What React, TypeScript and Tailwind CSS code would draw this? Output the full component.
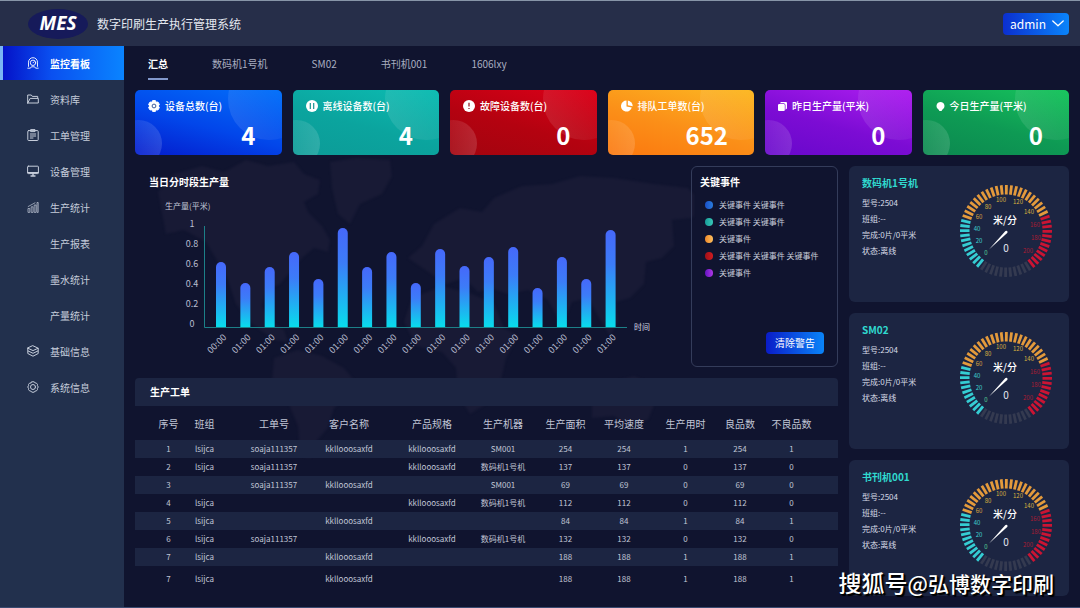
import React from "react";

const ink = { fill: "none", stroke: "currentColor", strokeWidth: 1, strokeLinecap: "round", strokeLinejoin: "round" } as const;

function Glyph({ children }: { children: React.ReactNode }) {
  return (
    <svg viewBox="0 0 12 12" className="size-3 shrink-0" aria-hidden="true" {...ink}>
      {children}
    </svg>
  );
}

const monitorIcon = (
  <Glyph>
    <path d="M1.500 9.400V5.200A4.500 4.500 0 0 1 10.500 5.200v4.200" strokeWidth=".9" />
    <circle cx="6" cy="5.800" r="2.700" strokeWidth=".9" />
    <path d="M6 5.800 7 4.800M.8 11.200h2.600l1-1.400h3.200l1 1.400h2.600" strokeWidth=".9" />
  </Glyph>
);
const folderIcon = (
  <Glyph>
    <path d="M.7 10V2h3.600l1 1.400h5.400V5M.7 10h10.600V5.400H3.200L.7 10" />
  </Glyph>
);
const orderIcon = (
  <Glyph>
    <rect x=".8" y="1.600" width="10.400" height="9.900" rx=".8" />
    <path d="M4 .600h4v2H4zM3.300 5h5.400M3.300 7h5.400M3.300 9h2.700" />
  </Glyph>
);
const screenIcon = (
  <Glyph>
    <rect x=".6" y="1.200" width="10.800" height="7.400" rx=".7" />
    <path d="M.8 7.600h10.400M4 11h4M6 8.800v2" strokeWidth="1.400" />
  </Glyph>
);
const chartIcon = (
  <Glyph>
    <path d="M1 11V7.500h1.800V11zM4.200 11V5.800H6V11zM7.200 11V4H9v7zM10 11V1.500h1.200V11zM1.200 5.500 8 1.800" strokeWidth=".7" />
  </Glyph>
);
const stackIcon = (
  <Glyph>
    <path d="M6 .8 11.200 3.200 6 5.600.8 3.200zM.8 3.400v2.400L6 8.300l5.200-2.500V3.400M.8 6v2.500L6 11.200l5.200-2.700V6" />
  </Glyph>
);
const gearIcon = (
  <Glyph>
    <path d="M4.500 1 6 .7 7.500 1l.7 1 1.300.2 1 1.300-.1 1.200.9 1.300-.9 1.300.1 1.200-1 1.300-1.300.2-.7 1-1.500.3-1.500-.3-.7-1-1.300-.2-1-1.300.1-1.200L.7 6l.9-1.300-.1-1.200 1-1.300L3.800 2z" />
    <circle cx="6" cy="6" r="2.500" />
  </Glyph>
);

const nav = [
  { label: "监控看板", icon: monitorIcon, active: true },
  { label: "资料库", icon: folderIcon },
  { label: "工单管理", icon: orderIcon },
  { label: "设备管理", icon: screenIcon },
  { label: "生产统计", icon: chartIcon },
  { label: "生产报表" },
  { label: "墨水统计" },
  { label: "产量统计" },
  { label: "基础信息", icon: stackIcon },
  { label: "系统信息", icon: gearIcon },
];

const tabs = ["汇总", "数码机1号机", "SM02", "书刊机001", "1606lxy"];

const stats = [
  {
    label: "设备总数(台)",
    value: "4",
    tone: "bg-[linear-gradient(15deg,#0420cf_5%,#0246ea_45%,#0270fa_100%)]",
    icon: (
      <svg viewBox="0 0 12 12" className="size-3 shrink-0" aria-hidden="true">
        <path fill="#fff" stroke="#fff" strokeLinejoin="round" d="M4.600.600h2.800L8 2.300l1.900-.3 1.500 2.400L10.300 6l1.100 1.600L9.900 10 8 9.700l-.6 1.700H4.600L4 9.700l-1.900.3L.6 7.600 1.700 6 .6 4.400 2.100 2l1.900.3z" />
        <circle cx="6" cy="6" r="1.900" fill="none" stroke="#3c5c9c" />
      </svg>
    ),
  },
  {
    label: "离线设备数(台)",
    value: "4",
    tone: "bg-[linear-gradient(15deg,#0c9c98_5%,#0ba49e_45%,#0cbcb2_100%)]",
    icon: (
      <svg viewBox="0 0 12 12" className="size-3 shrink-0" aria-hidden="true">
        <circle cx="6" cy="6" r="6" fill="#fff" />
        <path d="M4.300 3v6M7.700 3v6" stroke="#14938e" strokeWidth="1.200" />
      </svg>
    ),
  },
  {
    label: "故障设备数(台)",
    value: "0",
    tone: "bg-[linear-gradient(15deg,#a4040f_5%,#b40210_45%,#dc0018_100%)]",
    icon: (
      <svg viewBox="0 0 12 12" className="size-3 shrink-0" aria-hidden="true">
        <circle cx="6" cy="6" r="6" fill="#fff" />
        <path d="M6 2.800v3.800M6 8v1" stroke="#8c1018" strokeWidth="1.200" />
      </svg>
    ),
  },
  {
    label: "排队工单数(台)",
    value: "652",
    tone: "bg-[linear-gradient(15deg,#fb7a10_5%,#fb8f18_45%,#fcb822_100%)]",
    icon: (
      <svg viewBox="0 0 12 12" className="size-3 shrink-0" aria-hidden="true">
        <path fill="#fff" d="M5.500.6v5.800l5.300 1.200A5.500 5.500 0 1 1 5.500.6z" />
        <path fill="#fff" d="M6.800.4a5.600 5.600 0 0 1 4.900 5.900L6.800 5.200z" />
      </svg>
    ),
  },
  {
    label: "昨日生产量(平米)",
    value: "0",
    tone: "bg-[linear-gradient(15deg,#6a08cc_5%,#7c0cd4_45%,#ae1ef0_100%)]",
    icon: (
      <svg viewBox="0 0 9 9" className="size-[9px] shrink-0" aria-hidden="true">
        <path fill="#fff" d="M0 3.200A1.200 1.200 0 0 1 1.200 2H5.600A1.200 1.200 0 0 1 6.800 3.200V8A1 1 0 0 1 5.800 9H1A1 1 0 0 1 0 8zM1.800 1.300 3 0h5a1 1 0 0 1 1 1v5.500L7.500 7.800V2.800L6.200 1.300z" />
      </svg>
    ),
  },
  {
    label: "今日生产量(平米)",
    value: "0",
    tone: "bg-[linear-gradient(15deg,#0c8a50_5%,#0e9a54_45%,#16c45c_100%)]",
    icon: (
      <svg viewBox="0 0 9 9" className="size-[9px] shrink-0" aria-hidden="true">
        <path fill="#fff" d="M4.500 0a4 4 0 0 1 2.200 7.300L5.500 9h-2L2.300 7.300A4 4 0 0 1 4.500 0z" />
      </svg>
    ),
  },
];

const bars = [65, 44, 60, 75, 48, 99, 60, 75, 44, 78, 61, 70, 80, 39, 70, 48, 97];
const yTicks = ["1", "0.8", "0.6", "0.4", "0.2", "0"];

const events = [
  { text: "关键事件 关键事件", dot: "bg-[linear-gradient(to_right,#1a50c8,#2a7cdc)]" },
  { text: "关键事件 关键事件", dot: "bg-[linear-gradient(to_right,#189c98,#38c8b8)]" },
  { text: "关键事件", dot: "bg-[linear-gradient(to_right,#f08828,#fcc060)]" },
  { text: "关键事件 关键事件 关键事件", dot: "bg-[linear-gradient(to_right,#a01018,#d01c20)]" },
  { text: "关键事件", dot: "bg-[linear-gradient(to_right,#6414c0,#b038e8)]" },
];

const columns = [
  { name: "序号", width: "w-[51px]", pad: "pl-4" },
  { name: "班组", width: "w-[53px]", pad: "pr-4" },
  { name: "工单号", width: "w-[70px]", pad: "" },
  { name: "客户名称", width: "w-[80px]", pad: "" },
  { name: "产品规格", width: "w-[86px]", pad: "" },
  { name: "生产机器", width: "w-[56px]", pad: "" },
  { name: "生产面积", width: "w-[69px]", pad: "" },
  { name: "平均速度", width: "w-[48px]", pad: "" },
  { name: "生产用时", width: "w-[75px]", pad: "" },
  { name: "良品数", width: "w-[34px]", pad: "" },
  { name: "不良品数", width: "w-[81px]", pad: "pr-3" },
];

const L = "lsijca";
const O = "soaja111357";
const K = "kkllooosaxfd";
const M = "数码机1号机";
const rows = [
  ["1", L, O, K, K, "SM001", "254", "254", "1", "254", "1"],
  ["2", L, O, "", K, M, "137", "137", "0", "137", "0"],
  ["3", "", O, K, "", "SM001", "69", "69", "0", "69", "0"],
  ["4", L, "", "", K, M, "112", "112", "0", "112", "0"],
  ["5", L, "", K, "", "", "84", "84", "1", "84", "1"],
  ["6", L, O, "", K, M, "132", "132", "0", "132", "0"],
  ["7", L, "", K, "", "", "188", "188", "1", "188", "1"],
  ["7", L, "", K, "", "", "188", "188", "1", "188", "1"],
];

const dialLabels: [string, number, number, string][] = [
  ["0", -20, 22, "#58d89c"],
  ["20", -27, 10, "#3fd0d0"],
  ["40", -29, -2, "#3fd0d0"],
  ["60", -27, -14, "#d8a040"],
  ["80", -18, -24, "#d8b040"],
  ["100", -5, -31, "#d8b040"],
  ["120", 12, -29, "#d8b040"],
  ["140", 23, -19, "#d8b040"],
  ["160", 29, -6, "#a81c34"],
  ["180", 30, 7, "#a81c34"],
  ["200", 22, 20, "#a81c34"],
];

function tickColor(i: number) {
  if (i < 11) return "#35cdd3";
  if (i < 33) return "#e39a3c";
  if (i < 45) return "#cb1433";
  return "#343a50";
}

function Gauge() {
  return (
    <svg viewBox="-47 -47 94 94" className="size-[94px] shrink-0" role="img" aria-label="米/分 0">
      {Array.from({ length: 56 }, (_, i) => (
        <line key={i} x1="0" y1="-46" x2="0" y2="-36.500" stroke={tickColor(i)} strokeWidth="2.800" transform={`rotate(${-141 + i * 6.43})`} />
      ))}
      {dialLabels.map(([t, x, y, c]) => (
        <text key={t} x={x} y={y + 2} fill={c} fontSize="6" textAnchor="middle">{t}</text>
      ))}
      <text x="-1" y="-7" fill="#fff" fontSize="10" fontWeight="500" textAnchor="middle">米/分</text>
      <path d="M-17 18.500-.8.2A1.200 1.200 0 0 1 1.200 2z" fill="#fff" />
      <text y="21" fill="#e4e8f2" fontSize="10" textAnchor="middle">0</text>
    </svg>
  );
}

function MachineCard({ name }: { name: string }) {
  return (
    <section className="flex h-[136px] items-start justify-between rounded-md bg-[#1c2542] pt-[9px] pr-4 pl-[13px]">
      <div>
        <h2 className="text-[10px] leading-4 font-bold text-[#30d9cf]">{name}</h2>
        <div className="mt-1 text-[8px] leading-4 text-[#d8dce8]">
          <p>型号:2504</p>
          <p>班组:--</p>
          <p>完成:0片/0平米</p>
          <p>状态:离线</p>
        </div>
      </div>
      <div className="pt-[9px]">
        <Gauge />
      </div>
    </section>
  );
}

function HourlyChart() {
  return (
    <svg viewBox="0 0 556 166" className="w-full" role="img" aria-label="当日分时段生产量">
      <defs>
        <linearGradient id="bar" x1="0" y1="0" x2="0" y2="1">
          <stop offset="0" stopColor="#4668fa" />
          <stop offset="0.35" stopColor="#3c7cf8" />
          <stop offset="1" stopColor="#08dcec" />
        </linearGradient>
      </defs>
      <text x="30" y="9" fontSize="8" fill="#c4c8d8">生产量(平米)</text>
      {yTicks.map((t, i) => (
        <text key={t} x="57" y={27 + i * 20} fontSize="9" fill="#b8bdd0" textAnchor="middle">{t}</text>
      ))}
      <path d="M69.500 26v101.500H492" fill="none" stroke="#1c8088" />
      {bars.map((h, i) => {
        const x = 86 + i * 24.35;
        return (
          <g key={i}>
            <path d={`M${x - 5} 127V${132 - h}a5 5 0 0 1 10 0V127z`} fill="url(#bar)" />
            <text fontSize="9" fill="#b4b9cc" textAnchor="middle" transform={`translate(${x - 2} 146) rotate(-45)`}>
              {i === 0 ? "00:00" : "01:00"}
            </text>
          </g>
        );
      })}
      <text x="499" y="130" fontSize="8" fill="#d4d8e4">时间</text>
    </svg>
  );
}

function WorldMap() {
  return (
    <svg viewBox="0 0 540 300" className="absolute top-[112px] left-[30px] w-[540px] fill-[#181a35] blur-[1px]" aria-hidden="true">
      <path d="M4 34 20 16 48 8 70 14 92 2l22 6 26-4 10 12 16 6-2 14-14 8 4 10 14 14 8 14-2 12-14-4-12 10-10 12-12 14-14 6-4 16 8 14 14 10 4 12-14-2-22-16-16-20-8-24-10-18-12-20-22-12-18 4z" />
      <path d="M176 4l26-4 34 2 2 16-10 18-22 10-10 20-12-10-6-26z" />
      <path d="M120 200l24-8 24 6 22 12 10 12-6 16-14 12-6 20-14 16-4 16-10-6-2-28-10-24-16-20z" />
      <path d="M254 100l14-12 12-22 26-16 22 4 12-14 28-12 30-2 28-8 34 2 40 6 34 4 14 16-10 14-20 2 2 26-12 12-16 4-2 22-14 14-14 4 2 20-8 14-12-20-10-18-16 4-10 24-14-26-20-10-20 4-18-6-12 4-14-14-18 6z" />
      <path d="M258 140l30-12 30 8 22 10 10 24 14 8-12 22-6 26-14 20-16 10-12-20-2-26-14-16-26-6-12-24z" />
      <path d="M438 240l20-16 22-6 14 6 8 18-8 20-20 6-14-10-22 2z" />
    </svg>
  );
}

export default function App() {
  return (
    <div className="flex min-h-screen flex-col border-y border-t-[#8795a8] border-b-[#3a4a70] bg-[#10142f] font-['Noto_Sans_CJK_SC',sans-serif] text-white">
      <header className="flex h-[45px] shrink-0 items-center justify-between bg-[#262e49] pr-[11px] pl-7">
        <div className="flex items-center gap-[9px]">
          <div className="flex h-[30px] w-[60px] items-center justify-center rounded-[50%] bg-[#161a5a] font-['Open_Sans',sans-serif] text-[19px] leading-none font-bold italic">
            MES
          </div>
          <h1 className="text-[12px] leading-4 text-[#e4e8f0]">数字印刷生产执行管理系统</h1>
        </div>
        <button type="button" className="flex h-[22px] items-center gap-[6px] rounded bg-[linear-gradient(to_right,#0b2fd0,#0a84fa)] pr-[5px] pl-[7px] text-[12px] leading-4">
          admin
          <svg viewBox="0 0 12 7" className="w-3" aria-hidden="true" {...ink}>
            <path d="M.8 1 6 5.800 11.200 1" strokeWidth="1.300" />
          </svg>
        </button>
      </header>

      <div className="flex flex-1">
        <nav className="w-[124px] shrink-0 bg-[#22304d]">
          <ul className="flex flex-col gap-0.5">
            {nav.map((item) => (
              <li key={item.label}>
                <a
                  href="#"
                  className={
                    item.active
                      ? "flex h-[34px] items-center gap-[11px] border-l-[3px] border-[#7ab4f4] bg-[linear-gradient(to_right,#0412c8,#0a50f0_40%,#0a84ff)] pl-6 text-[10px] font-bold"
                      : "flex h-[34px] items-center gap-[11px] pl-[27px] text-[10px] text-[#c6cddb]"
                  }
                >
                  {item.icon ?? <span className="w-3" />}
                  {item.label}
                </a>
              </li>
            ))}
          </ul>
        </nav>

        <main className="relative flex min-w-0 flex-1 flex-col px-[11px]">
          <WorldMap />
          <div role="tablist" className="relative flex h-[34px] gap-11 pl-[13px]">
            {tabs.map((t, i) => (
              <button
                key={t}
                type="button"
                role="tab"
                aria-selected={i === 0}
                className={
                  i === 0
                    ? "border-y-2 border-t-transparent border-b-[#8298cc] text-[10px] font-bold"
                    : "border-y-2 border-transparent text-[10px] text-[#a9aec0]"
                }
              >
                {t}
              </button>
            ))}
          </div>

          <div className="relative mt-[10px] grid grid-cols-6 gap-[11px]">
            {stats.map((s) => (
              <section key={s.label} className={`relative h-[65px] overflow-hidden rounded-[5px] ${s.tone}`}>
                <span className="absolute -top-8 -right-7 size-[82px] rounded-full bg-[linear-gradient(60deg,rgba(255,255,255,0.12),rgba(255,255,255,0)_70%)]" />
                <span className="absolute -bottom-3 -left-5 size-[47px] rounded-full bg-[linear-gradient(to_left,rgba(255,255,255,0.14),rgba(255,255,255,0.03))]" />
                <div className="relative flex h-full flex-col pt-2">
                  <div className="flex items-center gap-[5px] pl-[13px]">
                    {s.icon}
                    <h2 className="text-[10px] leading-4 font-medium">{s.label}</h2>
                  </div>
                  <p className="mt-[9px] pr-[26px] text-right text-[24px] leading-6 font-bold">{s.value}</p>
                </div>
              </section>
            ))}
          </div>

          <div className="relative mt-[11px] flex gap-[11px]">
            <div className="min-w-0 flex-1">
              <div className="flex">
                <section className="min-w-0 flex-1 pt-2">
                  <h2 className="pl-[14px] text-[10px] leading-4 font-bold">当日分时段生产量</h2>
                  <div className="mt-[10px]">
                    <HourlyChart />
                  </div>
                </section>
                <section className="flex h-[201px] w-[147px] shrink-0 flex-col rounded-md border border-[#343c5a] px-2 pt-[7px] pb-3">
                  <h2 className="text-[10px] leading-4 font-bold">关键事件</h2>
                  <ul className="mt-[6px] pl-[5px] text-[8px] leading-[17px] text-[#c8ccda]">
                    {events.map((e, i) => (
                      <li key={i} className="flex items-center gap-[6px] whitespace-nowrap">
                        <span className={`size-2 rounded-full ${e.dot}`} />
                        {e.text}
                      </li>
                    ))}
                  </ul>
                  <button type="button" className="mt-auto mr-[5px] h-[22px] self-end rounded bg-[linear-gradient(to_right,#0a1cc8,#0a84f8)] px-[9px] text-[10px] leading-4">
                    清除警告
                  </button>
                </section>
              </div>

              <section className="mt-[11px]">
                <h2 className="rounded-t bg-[#1c2542] pl-[15px] text-[10px] leading-7 font-bold">生产工单</h2>
                <table className="w-full table-fixed text-center text-[8px] text-[#c0c5d5]">
                  <thead>
                    <tr className="h-[34px]">
                      {columns.map((c) => (
                        <th key={c.name} scope="col" className={`p-0 text-[10px] font-normal whitespace-nowrap ${c.width} ${c.pad}`}>
                          {c.name}
                        </th>
                      ))}
                    </tr>
                  </thead>
                  <tbody>
                    {rows.map((r, ri) => (
                      <tr key={ri} className="h-[18px] last:h-[26px] odd:bg-[#1c2542]">
                        {r.map((v, ci) => (
                          <td key={ci} className={`p-0 leading-4 whitespace-nowrap ${columns[ci].pad}`}>
                            {v}
                          </td>
                        ))}
                      </tr>
                    ))}
                  </tbody>
                </table>
              </section>
            </div>

            <aside className="flex w-[220px] shrink-0 flex-col gap-[11px]">
              <MachineCard name="数码机1号机" />
              <MachineCard name="SM02" />
              <MachineCard name="书刊机001" />
            </aside>
          </div>

          <p className="absolute right-[26px] bottom-2 text-[21px] leading-8 font-medium whitespace-nowrap [text-shadow:1px_1px_1px_#000,2px_2px_1px_#000]">
            <span className="text-[23px]">搜狐号</span>@弘博数字印刷
          </p>
        </main>
      </div>
    </div>
  );
}
